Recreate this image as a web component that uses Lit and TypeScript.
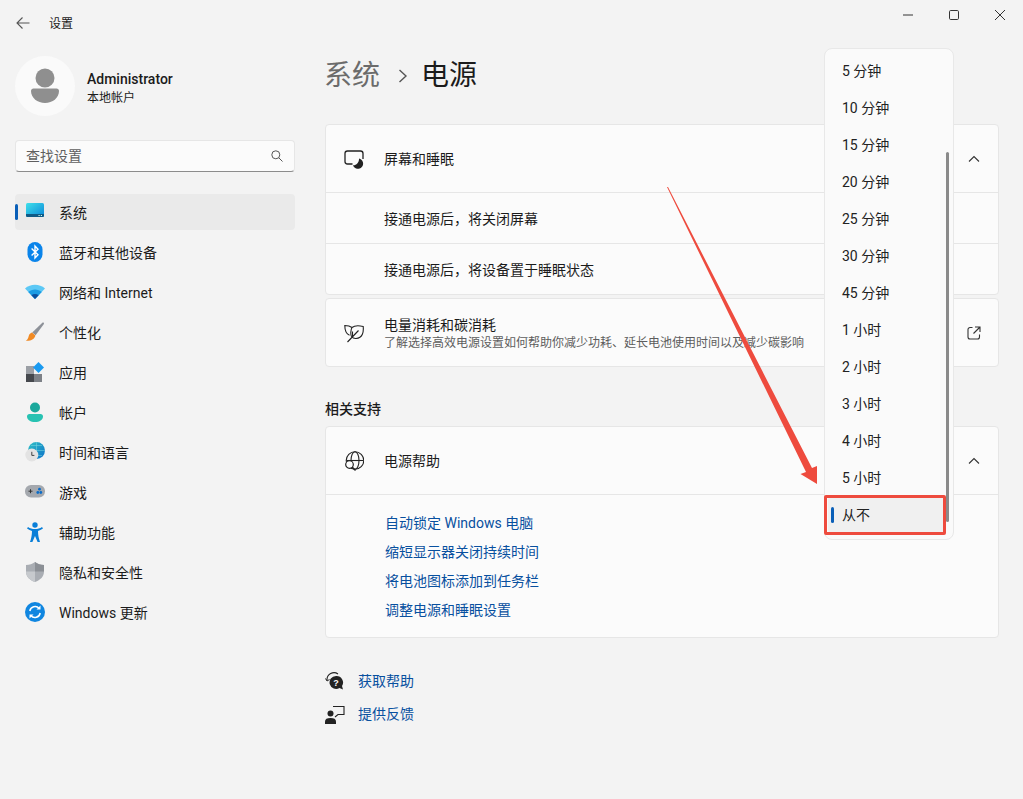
import { LitElement, html, css, svg } from "lit";
import { customElement } from "lit/decorators.js";

const navIcons: Record<string, unknown> = {
  system: svg`<defs><linearGradient id="g1" x1="0" y1="0" x2="1" y2="1"><stop offset="0" stop-color="#3fe0ea"/><stop offset="1" stop-color="#0a86d8"/></linearGradient></defs>
    <rect x="1" y="1" width="18" height="14" rx="1.5" fill="url(#g1)"/><path d="M1 12h18v1.5a1.5 1.5 0 0 1-1.5 1.5h-15A1.5 1.5 0 0 1 1 13.5z" fill="#0f5a86"/><rect x="13.5" y="13" width="1.2" height="1" fill="#cfe"/><rect x="15.8" y="13" width="1.2" height="1" fill="#cfe"/>`,
  bt: svg`<rect x="2.5" y="0" width="15" height="20" rx="7.5" fill="#0a84ea"/><path d="M6.6 6.6 13 12.8 10 16V4l3 3.2-6.4 6.2" fill="none" stroke="#fff" stroke-width="1.4"/>`,
  wifi: svg`<path d="M0 6.5C5.5 1.5 14.500 1.500 20 6.500L10 17z" fill="#5cc8f5"/><path d="M3.200 10C7 6.600 13 6.600 16.800 10L10 17z" fill="#1b9be3"/><path d="M6.400 13.200C8.400 11.600 11.600 11.600 13.600 13.200L10 17z" fill="#0b4f9e"/>`,
  brush: svg`<path d="M17.600 0.600c.9-.4 1.700.4 1.300 1.300L10.600 13.200 7.200 10.400z" fill="#8d9198"/><path d="M7 10.600l3.400 2.800c-.6 3-3.600 5.600-9.600 5.400 2.200-1.200 2.400-3 3-5 .5-1.600 1.700-2.800 3.200-3.200z" fill="#f08a24"/>`,
  apps: svg`<rect x="1" y="4" width="8" height="8" fill="#9b9fa5"/><rect x="1" y="12" width="8" height="8" fill="#45484d"/><rect x="9" y="12" width="8" height="8" fill="#7d8187"/><path d="M13.500 0 19 5.500 13.500 11 8 5.500z" fill="#1a9af0"/>`,
  user: svg`<circle cx="10" cy="5.500" r="5" fill="#1aa89c"/><path d="M2 14.500c0-1.400 1-2.500 2.400-2.500h11.200c1.400 0 2.400 1.100 2.400 2.500 0 3.500-3.600 5.500-8 5.500s-8-2-8-5.500z" fill="#28c2b2"/>`,
  time: svg`<defs><linearGradient id="g2" x1="0" y1="0" x2="1" y2="1"><stop offset="0" stop-color="#2fc1c6"/><stop offset="1" stop-color="#0d72c9"/></linearGradient></defs>
    <circle cx="11.500" cy="8.500" r="8.500" fill="url(#g2)"/><path d="M11.500 0v17M3 8.500h17M6 3.500h11M6 13.500h11" stroke="#7fd8e0" stroke-width=".5"/><circle cx="6.800" cy="13" r="6.500" fill="#e3e3e3"/><path d="M6.800 9.800v3.600h2.600" fill="none" stroke="#444" stroke-width="1"/>`,
  game: svg`<rect x="0" y="3" width="20" height="12.500" rx="6" fill="#a4a8ae"/><path d="M3.500 9.200h4M5.500 7.200v4" stroke="#333" stroke-width="1"/><circle cx="14.500" cy="7.200" r="1.400" fill="#0a6cc8"/><circle cx="12.800" cy="10.500" r="1.400" fill="#0a6cc8"/><circle cx="15.800" cy="10.500" r="1.400" fill="#0a6cc8"/>`,
  access: svg`<circle cx="10" cy="3" r="2.700" fill="#0a7fd8"/><path d="M2 6.500 3 5c2 1.400 4.300 2 7 2s5-.6 7-2l1 1.500c-1.700 1.300-3.500 2-5 2.400 0 4 .8 7.500 2 11h-2.400L10 14l-2.600 6H5c1.200-3.500 2-7 2-11.100C5.500 8.500 3.700 7.800 2 6.500z" fill="#0a7fd8"/>`,
  shield: svg`<path d="M10 0c2.500 2 5.500 3 9 3v6.500c0 5-3.500 8.500-9 10.500-5.500-2-9-5.500-9-10.500V3c3.500 0 6.500-1 9-3z" fill="#a9adb3"/><path d="M10 0c2.500 2 5.500 3 9 3v6.500H10z" fill="#8b8f95"/><path d="M1 9.500h9V20c-5.500-2-9-5.500-9-10.500z" fill="#c6c9cd"/>`,
  update: svg`<circle cx="10" cy="10" r="10" fill="#1086e0"/><path d="M4.800 9a5.400 5.400 0 0 1 9.400-2.600M15.200 11a5.400 5.400 0 0 1-9.400 2.600" fill="none" stroke="#fff" stroke-width="1.500"/><path d="M15.500 3.500v4h-4zM4.500 16.500v-4h4z" fill="#fff"/>`,
};

const nav = [
  ["system", "系统"], ["bt", "蓝牙和其他设备"], ["wifi", "网络和 Internet"], ["brush", "个性化"],
  ["apps", "应用"], ["user", "帐户"], ["time", "时间和语言"], ["game", "游戏"],
  ["access", "辅助功能"], ["shield", "隐私和安全性"], ["update", "Windows 更新"],
];

const options = ["5 分钟", "10 分钟", "15 分钟", "20 分钟", "25 分钟", "30 分钟", "45 分钟", "1 小时", "2 小时", "3 小时", "4 小时", "5 小时", "从不"];
const links = ["自动锁定 Windows 电脑", "缩短显示器关闭持续时间", "将电池图标添加到任务栏", "调整电源和睡眠设置"];

const chevron = html`<svg class="end" viewBox="0 0 16 16"><path d="M3 10.500 8 5.500l5 5" fill="none" stroke="#333" stroke-width="1.100"/></svg>`;

@customElement("app-root")
export class AppRoot extends LitElement {
  static styles = css`
    :host { display: block; position: relative; width: 1023px; height: 799px; overflow: hidden; background: #f3f3f3; color: #1b1b1b;
      font-family: Roboto, "Noto Sans CJK SC", sans-serif; font-size: 14px; line-height: 20px; }
    svg { display: block; flex: none; }
    .titlebar { display: flex; height: 46px; align-items: center; }
    .back { width: 14px; height: 14px; margin-left: 16px; margin-right: 19px; }
    .apptitle { font-size: 12px; flex: 1; padding-top: 1px; }
    .controls { display: flex; align-self: flex-start; }
    .controls div { width: 46px; height: 30px; display: flex; align-items: center; justify-content: center; }
    .layout { display: flex; height: 753px; }
    .sidebar { box-sizing: border-box; width: 310px; padding: 10px 15px 0; flex: none; }
    .profile { display: flex; align-items: center; gap: 12px; height: 60px; margin-bottom: 24px; }
    .avatar { width: 60px; height: 60px; }
    .who { padding-top: 4px; }
    .name { font-size: 14px; font-weight: 500; line-height: 18px; }
    .account { font-size: 12px; line-height: 18px; margin-top: 1px; }
    .search { box-sizing: border-box; height: 32px; background: #fbfbfb; border: 1px solid #e6e6e6; border-bottom-color: #8c8c8c; border-radius: 4px;
      display: flex; align-items: center; justify-content: space-between; padding: 0 11px 0 10px; color: #5f5f5f; margin-bottom: 22px; }
    .nav { display: flex; flex-direction: column; gap: 4px; }
    .item { position: relative; height: 36px; border-radius: 4px; display: flex; align-items: center; gap: 14px; padding-left: 10px; }
    .item span { padding-top: 1px; }
    .item.active { background: #eaeaea; }
    .item.active::before { content: ""; position: absolute; left: 0; top: 10px; width: 3px; height: 16px; border-radius: 2px; background: #0a5fb8; }
    .item svg { width: 20px; height: 20px; }
    .main { width: 674px; margin-left: 15px; flex: none; }
    .crumb { box-sizing: border-box; display: flex; align-items: center; height: 56px; padding-top: 3px; font-size: 28px; margin-bottom: 22px; margin-left: -1px; }
    .crumb .parent { color: #6b6b6b; }
    .crumb svg { width: 12px; height: 16px; margin: 0 12px 0 17px; }
    .card { background: #fbfbfb; border: 1px solid #e6e6e6; border-radius: 4px; }
    .row { display: flex; align-items: center; padding: 0 16px 0 18px; }
    .head { height: 67px; border-bottom: 1px solid #e6e6e6; }
    .sub { height: 50px; padding-left: 58px; border-bottom: 1px solid #e6e6e6; }
    .sub:last-child { border-bottom: 0; height: 50px; }
    .sub span { padding-top: 1px; }
    .lead { width: 20px; height: 20px; margin-right: 20px; }
    .grow { flex: 1; }
    .end { width: 16px; height: 16px; }
    .combo { width: 130px; height: 32px; box-sizing: border-box; background: #fdfdfd; border: 1px solid #e2e2e2; border-radius: 4px; margin-right: 28px; }
    .energy { margin-top: 3px; height: 67px; }
    .energy .row { height: 67px; }
    .desc { font-size: 12px; line-height: 16px; color: #5d5d5d; }
    .section { font-weight: 500; margin: 32px 0 7px; }
    .links { padding: 14px 0 12px 59px; }
    .links a, .foot a { color: #08509f; display: block; }
    .links a { line-height: 29px; }
    .foot { margin-top: 28px; display: flex; flex-direction: column; gap: 3px; }
    .foot div { display: flex; align-items: center; height: 30px; gap: 13px; }
    .foot svg { width: 20px; height: 20px; }
    .dropdown { position: absolute; left: 824px; top: 48px; width: 130px; height: 492px; box-sizing: border-box; padding-top: 3px;
      background: #fafafa; border: 1px solid #e8e8e8; border-radius: 8px; }
    .opt { height: 37px; display: flex; align-items: center; padding-left: 17px; color: #222; }
    .opt.sel { position: relative; background: #f0f0f0; border-radius: 4px; margin: 0 7px 0 3px; padding-left: 14px; }
    .opt.sel::before { content: ""; position: absolute; left: 3px; top: 11px; width: 3px; height: 16px; border-radius: 2px; background: #0a5fb8; }
    .thumb { position: absolute; left: 121px; top: 103px; width: 3px; height: 370px; border-radius: 2px; background: #8a8a8a; }
    .redbox { position: absolute; left: 824px; top: 495px; width: 122px; height: 40px; box-sizing: border-box; border: 3px solid #ee4b3e; border-radius: 2px; }
    .arrow { position: absolute; left: 0; top: 0; width: 1023px; height: 799px; pointer-events: none; }
  `;

  render() {
    return html`
      <div class="titlebar">
        <svg class="back" viewBox="0 0 14 14"><path d="M13.500 7H1M6.500 1.500 1 7l5.500 5.500" fill="none" stroke="#555" stroke-width="1.100"/></svg>
        <div class="apptitle">设置</div>
        <div class="controls">
          <div><svg width="10" height="10" viewBox="0 0 10 10"><path d="M0 5h10" stroke="#333" stroke-width="1"/></svg></div>
          <div><svg width="10" height="10" viewBox="0 0 10 10"><rect x=".5" y=".5" width="9" height="9" rx="1.200" fill="none" stroke="#333" stroke-width="1"/></svg></div>
          <div><svg width="10" height="10" viewBox="0 0 10 10"><path d="M0 0l10 10M10 0 0 10" stroke="#333" stroke-width="1"/></svg></div>
        </div>
      </div>
      <div class="layout">
        <aside class="sidebar">
          <div class="profile">
            <svg class="avatar" viewBox="0 0 60 60"><circle cx="30" cy="30" r="30" fill="#fafafa"/><circle cx="30" cy="22" r="9.500" fill="#8f8f8f"/><path d="M16 35c0-1.500 1-2.500 2.500-2.500h23c1.500 0 2.500 1 2.500 2.500 0 7-6.500 12-14 12s-14-5-14-12z" fill="#8f8f8f"/></svg>
            <div class="who">
              <div class="name">Administrator</div>
              <div class="account">本地帐户</div>
            </div>
          </div>
          <div class="search">
            <span>查找设置</span>
            <svg width="12" height="12" viewBox="0 0 12 12"><circle cx="4.800" cy="4.800" r="4" fill="none" stroke="#555" stroke-width="1"/><path d="M7.700 7.700 11.500 11.500" stroke="#555" stroke-width="1"/></svg>
          </div>
          <nav class="nav">
            ${nav.map(([icon, label], i) => html`
              <div class="item ${i === 0 ? "active" : ""}">
                <svg viewBox="0 0 20 20">${navIcons[icon]}</svg>
                <span>${label}</span>
              </div>`)}
          </nav>
        </aside>
        <main class="main">
          <div class="crumb">
            <span class="parent">系统</span>
            <svg viewBox="0 0 12 16"><path d="M2.500 2 9 8l-6.500 6" fill="none" stroke="#555" stroke-width="1.400"/></svg>
            <span>电源</span>
          </div>
          <section class="card">
            <div class="row head">
              <svg class="lead" viewBox="0 0 20 20"><path d="M8.500 15H3.500A2.500 2.500 0 0 1 1 12.500v-8A2.500 2.500 0 0 1 3.500 2h13A2.500 2.500 0 0 1 19 4.500V10" fill="none" stroke="#222" stroke-width="1.300"/><path d="M15 9.500a5.200 5.200 0 1 1-6 6.800c3 .5 6.300-2.800 6-6.800z" fill="#222"/></svg>
              <span class="grow">屏幕和睡眠</span>
              ${chevron}
            </div>
            <div class="row sub"><span class="grow">接通电源后，将关闭屏幕</span><div class="combo"></div></div>
            <div class="row sub"><span class="grow">接通电源后，将设备置于睡眠状态</span><div class="combo"></div></div>
          </section>
          <section class="card energy">
            <div class="row">
              <svg class="lead" viewBox="0 0 20 20"><path d="M8 4.500C6 3 3.500 2.500 .8 2.500c0 4 .5 8 4.700 9.800M8 4.500C10.500 2.500 15 2.500 19.200 3.500c.5 5-.3 11.500-7.200 12-2 .1-3.500-.7-4.500-2C6.500 12 6.500 7 8 4.500z" fill="none" stroke="#222" stroke-width="1.100"/><path d="M3.500 19 14.500 7.500M8.500 13.500V8.500" fill="none" stroke="#222" stroke-width="1.100"/></svg>
              <div class="grow">
                <div>电量消耗和碳消耗</div>
                <div class="desc">了解选择高效电源设置如何帮助你减少功耗、延长电池使用时间以及减少碳影响</div>
              </div>
              <svg class="end" viewBox="0 0 16 16"><path d="M6.500 2.500H4A2 2 0 0 0 2 4.500v7.500a2 2 0 0 0 2 2h7.500a2 2 0 0 0 2-2V9.500M9 2h5v5M14 2 7.500 8.500" fill="none" stroke="#333" stroke-width="1.100"/></svg>
            </div>
          </section>
          <div class="section">相关支持</div>
          <section class="card">
            <div class="row head">
              <svg class="lead" viewBox="0 0 20 20"><circle cx="11" cy="9.500" r="8.800" fill="none" stroke="#222" stroke-width="1.100"/><ellipse cx="11" cy="9.500" rx="4" ry="8.800" fill="none" stroke="#222" stroke-width="1.100"/><path d="M2.500 9.500h17" stroke="#222" stroke-width="1.100"/><circle cx="5.500" cy="13.500" r="3.800" fill="#fbfbfb" stroke="#222" stroke-width="1.200"/><path d="M8.200 16.200 11.500 19.500" stroke="#222" stroke-width="1.300"/></svg>
              <span class="grow">电源帮助</span>
              ${chevron}
            </div>
            <div class="links">${links.map((l) => html`<a>${l}</a>`)}</div>
          </section>
          <div class="foot">
            <div>
              <svg viewBox="0 0 20 20"><path d="M2 9a7 7 0 0 1 11-6" fill="none" stroke="#222" stroke-width="1.100"/><path d="M0.500 7.500 2 10l2.500-1.500" fill="none" stroke="#222" stroke-width="1"/><path d="M11 5a6.500 6.500 0 1 0 3.500 12l3.500 1.500-1-3.500A6.500 6.500 0 0 0 11 5z" fill="#222"/><text x="11" y="15" font-size="9" font-weight="700" text-anchor="middle" fill="#fff" font-family="Liberation Sans">?</text></svg>
              <a>获取帮助</a>
            </div>
            <div>
              <svg viewBox="0 0 20 20"><circle cx="5.500" cy="9.500" r="3" fill="#222"/><path d="M0 20v-2.500C0 15 2 14 5.500 14s5.500 1 5.500 3.500V20z" fill="#222"/><path d="M8 2.500h11v8h-6l-3 2.500" fill="none" stroke="#222" stroke-width="1.100"/></svg>
              <a>提供反馈</a>
            </div>
          </div>
        </main>
      </div>
      <div class="dropdown">
        ${options.map((o, i) => html`<div class="opt ${i === options.length - 1 ? "sel" : ""}">${o}</div>`)}
        <div class="thumb"></div>
      </div>
      <div class="redbox"></div>
      <svg class="arrow" viewBox="0 0 1023 799"><polygon points="667,187 668,187 812,468 817,466 817,484 800.500,474 806,472" fill="#ee4b3e"/></svg>
    `;
  }
}
